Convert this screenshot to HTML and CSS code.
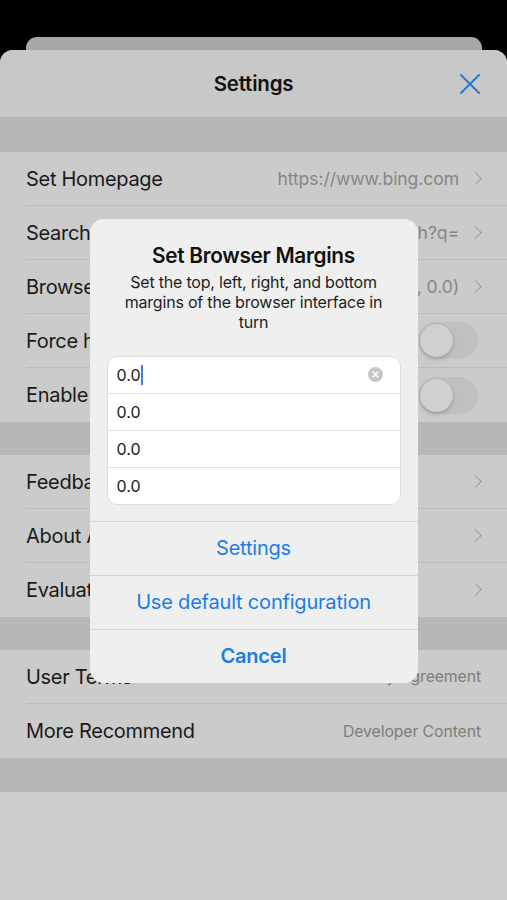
FILE: index.html
```html
<!DOCTYPE html>
<html>
<head>
<meta charset="utf-8">
<link rel="stylesheet" href="styles.css">
</head>
<body>
<div class="screen">
  <div class="backcard"></div>
  <div class="sheet">
    <div class="header">
      <div class="title">Settings</div>
      <svg class="close" width="22" height="22" viewBox="0 0 22 22"><path d="M2 2 L20 20 M20 2 L2 20" stroke="#2b78d2" stroke-width="2" stroke-linecap="round" fill="none"/></svg>
    </div>
    <div class="gap"></div>
    <div class="section">
      <div class="row"><div class="inner"><span class="label">Set Homepage</span><span class="value">https://www.bing.com</span><span class="chev"></span></div></div>
      <div class="row"><div class="inner"><span class="label">Search Engine</span><span class="value">https://www.bing.com/search?q=</span><span class="chev"></span></div></div>
      <div class="row"><div class="inner"><span class="label">Browser Margins</span><span class="value">(0.0, 0.0, 0.0, 0.0)</span><span class="chev"></span></div></div>
      <div class="row"><div class="inner"><span class="label">Force horizontal screen</span><span class="toggle"><span class="knob"></span></span></div></div>
      <div class="row last"><div class="inner"><span class="label">Enable full screen</span><span class="toggle"><span class="knob"></span></span></div></div>
    </div>
    <div class="gap mid"></div>
    <div class="section">
      <div class="row"><div class="inner"><span class="label">Feedback</span><span class="value"></span><span class="chev"></span></div></div>
      <div class="row"><div class="inner"><span class="label">About App</span><span class="value"></span><span class="chev"></span></div></div>
      <div class="row last"><div class="inner"><span class="label">Evaluate App</span><span class="value"></span><span class="chev"></span></div></div>
    </div>
    <div class="gap mid"></div>
    <div class="section">
      <div class="row"><div class="inner"><span class="label">User Terms</span><span class="value small">Privacy Agreement</span></div></div>
      <div class="row last"><div class="inner"><span class="label">More Recommend</span><span class="value small">Developer Content</span></div></div>
    </div>
    <div class="gap"></div>
    <div class="rest"></div>
  </div>

  <div class="overlay">
    <div class="dialog">
      <div class="dlg-body">
        <div class="dlg-title">Set Browser Margins</div>
        <div class="dlg-msg">Set the top, left, right, and bottom margins of the browser interface in turn</div>
        <div class="fields">
          <div class="field active"><span class="ftext">0.0</span><span class="caret"></span><span class="clear"><svg width="15" height="15" viewBox="0 0 15 15"><circle cx="7.5" cy="7.5" r="7.5" fill="#c6c6c6"/><path d="M5 5 L10 10 M10 5 L5 10" stroke="#fff" stroke-width="1.5" stroke-linecap="round"/></svg></span></div>
          <div class="field"><span class="ftext">0.0</span></div>
          <div class="field"><span class="ftext">0.0</span></div>
          <div class="field"><span class="ftext">0.0</span></div>
        </div>
      </div>
      <div class="btn">Settings</div>
      <div class="btn">Use default configuration</div>
      <div class="btn bold">Cancel</div>
    </div>
  </div>
</div>
</body>
</html>
```
FILE: styles.css
```css
* { box-sizing: border-box; }
html, body { margin: 0; padding: 0; }
body {
  width: 507px;
  height: 900px;
  overflow: hidden;
  background: #000;
  font-family: "Inter", "Liberation Sans", sans-serif;
}
.screen {
  position: relative;
  width: 507px;
  height: 900px;
  padding-top: 37px;
  display: flex;
  flex-direction: column;
}
.backcard {
  margin: 0 25px 0 26px;
  height: 13px;
  background: #a7a7a7;
  border-radius: 11px 11px 0 0;
}
.sheet {
  flex: 1;
  background: #cdcdcd;
  border-radius: 13px 13px 0 0;
  overflow: hidden;
  display: flex;
  flex-direction: column;
}
.header {
  height: 68px;
  background: #c8c8c8;
  border-bottom: 1px solid #b3b3b3;
  display: flex;
  align-items: center;
  justify-content: center;
  position: relative;
}
.title {
  font-size: 20.5px;
  font-weight: 600;
  color: #111;
  letter-spacing: -0.2px;
}
.close {
  position: absolute;
  right: 26px;
  top: 23px;
}
.gap {
  height: 34px;
  background: #b7b7b7;
}
.gap.mid { height: 33px; }
.section { background: #cbcbcb; }
.row {
  height: 54px;
  padding-left: 26px;
}
.inner {
  height: 100%;
  display: flex;
  align-items: center;
  border-bottom: 1px solid #bcbcbc;
  padding-right: 26px;
}
.row.last .inner { border-bottom: none; }
.label {
  font-size: 20px;
  color: #1a1a1a;
  white-space: nowrap;
  letter-spacing: -0.3px;
  flex: none;
}
.value {
  flex: 1;
  text-align: right;
  white-space: nowrap;
  overflow: hidden;
  font-size: 17.6px;
  color: #868686;
  margin-left: 10px;
  letter-spacing: -0.1px;
}
.value.small {
  font-size: 15.8px;
  color: #7d7d7d;
}
.chev {
  flex: none;
  width: 10px;
  height: 14px;
  margin-left: 13px;
  margin-right: -1px;
  position: relative;
}
.chev::before {
  content: "";
  position: absolute;
  left: -1px;
  top: 2px;
  width: 8px;
  height: 8px;
  border-top: 1.6px solid #9b9b9b;
  border-right: 1.6px solid #9b9b9b;
  transform: rotate(45deg);
}
.toggle {
  margin-left: auto;
  margin-right: 3px;
  width: 60px;
  height: 37px;
  border-radius: 19px;
  background: #c0c0c0;
  display: flex;
  align-items: center;
  padding-left: 2px;
}
.knob {
  width: 33px;
  height: 33px;
  border-radius: 50%;
  background: #d0d0d0;
  box-shadow: 0 2px 4px rgba(0,0,0,0.18), 0 0 1px rgba(0,0,0,0.15);
}
.rest { flex: 1; background: #cdcdcd; }

.overlay {
  position: absolute;
  inset: 0;
  display: flex;
  align-items: center;
  justify-content: center;
  padding-top: 1px;
}
.dialog {
  width: 328px;
  background: #efefef;
  border-radius: 14px;
  overflow: hidden;
}
.dlg-body {
  padding: 25px 17px 16px;
  text-align: center;
}
.dlg-title {
  font-size: 20.8px;
  line-height: 24px;
  font-weight: 600;
  color: #111;
  letter-spacing: -0.3px;
}
.dlg-msg {
  margin: 4px auto 0;
  max-width: 268px;
  font-size: 16px;
  line-height: 20px;
  color: #1e1e1e;
  letter-spacing: -0.2px;
}
.fields {
  margin-top: 24px;
  background: #fff;
  border-radius: 10px;
  border: 1px solid #dedede;
  overflow: hidden;
  text-align: left;
}
.field {
  height: 37px;
  display: flex;
  align-items: center;
  padding-left: 9px;
  padding-right: 17px;
  border-top: 1px solid #e2e2e2;
}
.field:first-child { border-top: none; height: 36px; }
.ftext {
  font-size: 16px;
  color: #1a1a1a;
}
.caret {
  width: 1.5px;
  height: 20px;
  background: #3d7fe0;
  margin-left: 1px;
}
.clear {
  margin-left: auto;
  display: flex;
}
.btn {
  height: 54px;
  border-top: 1px solid #d6d6d6;
  display: flex;
  align-items: center;
  justify-content: center;
  font-size: 20px;
  color: #1b7de6;
  letter-spacing: -0.2px;
}
.btn.bold { font-weight: 600; }
```
